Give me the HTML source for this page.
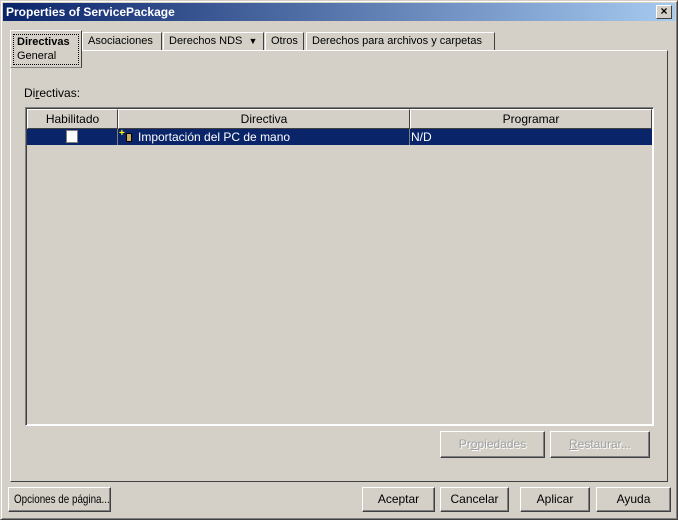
<!DOCTYPE html><html><head><style>
*{box-sizing:border-box;margin:0;padding:0}
html,body{width:678px;height:520px;overflow:hidden}
body{background:#d4d0c8;font-family:"Liberation Sans",sans-serif;font-size:12px;color:#000;position:relative}
.a{position:absolute;white-space:nowrap}
.win{left:0;top:0;width:678px;height:520px;border:1px solid;border-color:#d4d0c8 #404040 #404040 #d4d0c8;box-shadow:inset 1px 1px #fff,inset -1px -1px #808080}
.title{left:3px;top:3px;width:672px;height:18px;background:linear-gradient(90deg,#0a246a,#a6caf0);color:#fff;font-weight:bold;font-size:12px;line-height:18px;padding-left:3px}
.close{left:656px;top:5px;width:16px;height:14px;background:#d4d0c8;border:1px solid;border-color:#fff #404040 #404040 #fff;font-size:12px;line-height:11px;text-align:center;font-weight:bold;color:#000}
.tab{top:32px;height:18px;border:1px solid;border-color:#fff #404040 transparent #fff;border-bottom:none;line-height:17px;padding-left:5px;font-size:11px}
.btn{border:1px solid;border-color:#fff #404040 #404040 #fff;box-shadow:inset -1px -1px #808080;text-align:center;font-size:12px}
.dis{color:#a0a0a0;text-shadow:1px 1px #fff}
.hd{top:109px;height:20px;border:1px solid;border-color:#fff #404040 #404040 #fff;text-align:center;line-height:18px}
</style></head><body>
<div class="a win"></div>
<div class="a title">Properties of ServicePackage</div>
<div class="a close">×</div>
<div class="a" style="left:10px;top:50px;width:658px;height:432px;border:1px solid;border-color:#fff #404040 #404040 #fff"></div>
<div class="a tab" style="left:82px;width:80px">Asociaciones</div>
<div class="a tab" style="left:163px;width:101px">Derechos NDS &nbsp;<span style="font-size:9px">▼</span></div>
<div class="a tab" style="left:265px;width:39px">Otros</div>
<div class="a tab" style="left:306px;width:189px">Derechos para archivos y carpetas</div>
<div class="a" style="left:10px;top:30px;width:72px;height:38px;background:#d4d0c8;border:1px solid;border-color:#fff #404040 #808080 #fff"></div>
<div class="a" style="left:13px;top:34px;width:66px;height:31px;border:1px dotted #000;font-size:11px;line-height:14px;padding-left:3px"><b>Directivas</b><br>General</div>
<div class="a" style="left:24px;top:86px">Di<u>r</u>ectivas:</div>
<div class="a" style="left:25px;top:107px;width:629px;height:319px;background:#fff;border:1px solid;border-color:#808080 #fff #fff #808080;box-shadow:inset 1px 1px #404040"></div>
<div class="a" style="left:27px;top:109px;width:625px;height:315px;background:#d4d0c8"></div>
<div class="a hd" style="left:27px;width:91px">Habilitado</div>
<div class="a hd" style="left:118px;width:292px">Directiva</div>
<div class="a hd" style="left:410px;width:242px">Programar</div>
<div class="a" style="left:27px;top:129px;width:625px;height:16px;background:#0a246a"></div>
<div class="a" style="left:117px;top:129px;width:1px;height:16px;background:#808080"></div>
<div class="a" style="left:409px;top:129px;width:1px;height:16px;background:#808080"></div>
<div class="a" style="left:66px;top:130px;width:12px;height:13px;background:#fff;border:1px solid #808080"></div>
<div class="a" style="left:119px;top:128px;color:#ff0;font-size:10px;font-weight:bold">+</div>
<div class="a" style="left:126px;top:133px;width:6px;height:9px;background:#c8b060;border:1px solid #000"></div>
<div class="a" style="left:138px;top:130px;color:#fff">Importación del PC de mano</div>
<div class="a" style="left:411px;top:130px;color:#fff">N/D</div>
<div class="a btn dis" style="left:440px;top:431px;width:105px;height:27px;line-height:25px">Pr<u>o</u>piedades</div>
<div class="a btn dis" style="left:550px;top:431px;width:100px;height:27px;line-height:25px"><u>R</u>estaurar...</div>
<div class="a btn" style="left:8px;top:487px;width:103px;height:25px;line-height:23px"></div>
<div class="a" style="left:14px;top:492px;font-size:12px;transform:scaleX(0.82);transform-origin:0 0">Opciones de página...</div>
<div class="a btn" style="left:362px;top:487px;width:73px;height:25px;line-height:23px">Aceptar</div>
<div class="a btn" style="left:440px;top:487px;width:69px;height:25px;line-height:23px">Cancelar</div>
<div class="a btn" style="left:520px;top:487px;width:70px;height:25px;line-height:23px">Aplicar</div>
<div class="a btn" style="left:596px;top:487px;width:75px;height:25px;line-height:23px">Ayuda</div>
</body></html>
